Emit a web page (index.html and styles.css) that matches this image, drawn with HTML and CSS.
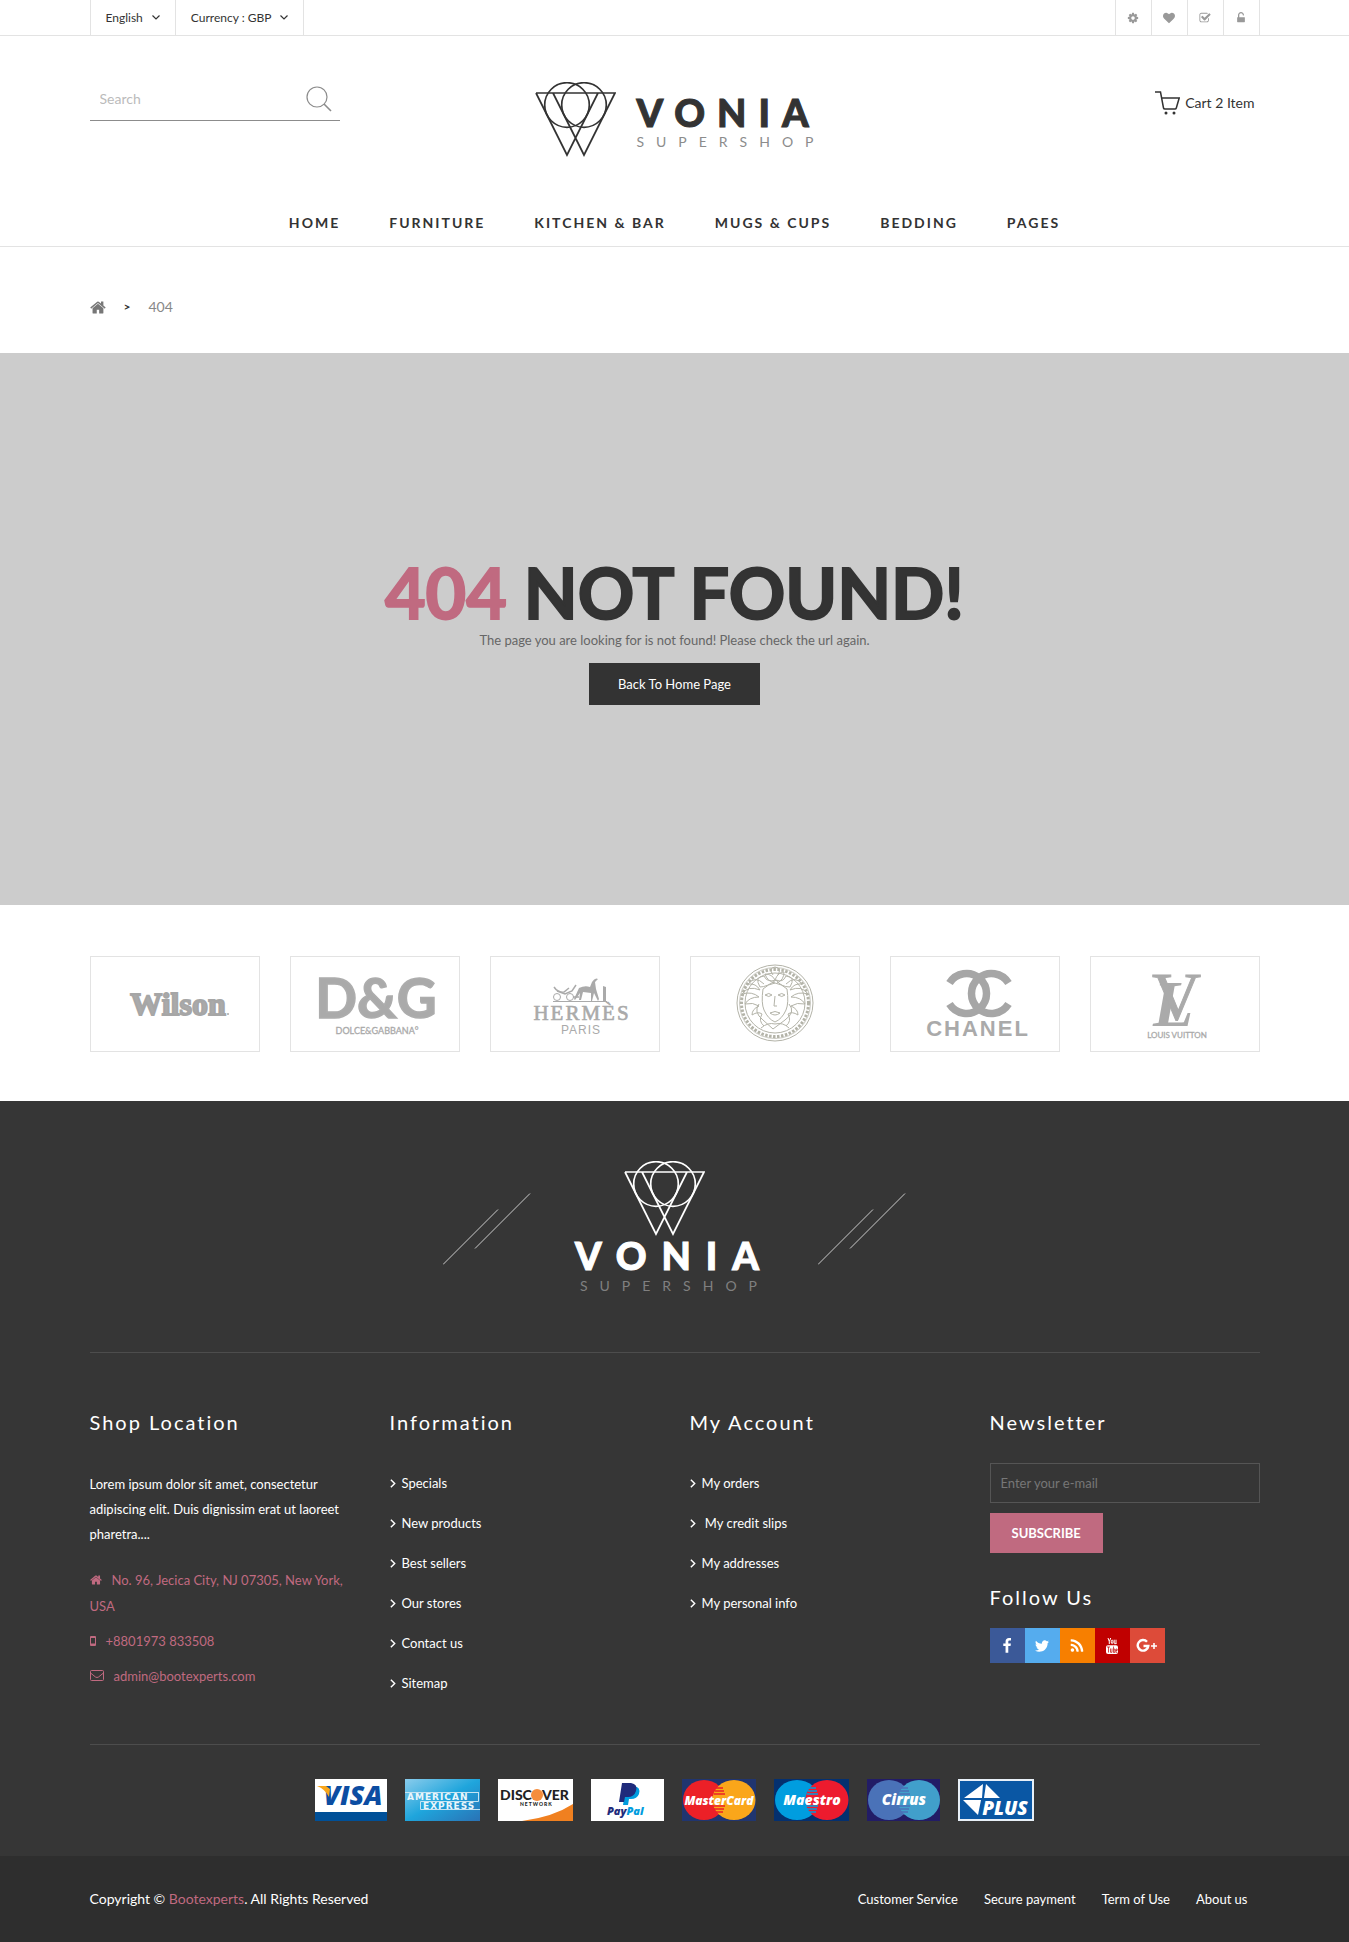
FILE: index.html
```html
<!DOCTYPE html>
<html lang="en">
<head>
<meta charset="utf-8">
<meta name="viewport" content="width=device-width, initial-scale=1">
<title>404 - Vonia</title>
<link rel="stylesheet" href="styles.css">
</head>
<body>
<svg class="sprite" aria-hidden="true">
  <symbol id="mark" viewBox="0 0 81 75"><g fill="none" stroke="currentColor" stroke-width="1.700"><path d="M1 11H80L49 73 18 11M1 11L32 73 63 11"/><circle cx="32" cy="23" r="22.300"/><circle cx="49" cy="23" r="22.300"/></g></symbol>
  <symbol id="slashes" viewBox="0 0 88 72"><path d="M0 71.500L55 16.500M32 55.500L87 .5" fill="none" stroke="#ddd" stroke-width=".9"/></symbol>
  <symbol id="down" viewBox="0 0 8 5"><path d="M.5.5L4 4 7.500.5" fill="none" stroke="currentColor" stroke-width="1.200"/></symbol>
  <symbol id="right" viewBox="0 0 5 8"><path d="M.6.6L4 4 .6 7.400" fill="none" stroke="currentColor" stroke-width="1.300"/></symbol>
  <symbol id="home" viewBox="50 250 1700 1300"><path fill="currentColor" d="M1472 992v480q0 26-19 45t-45 19h-384v-384h-256v384h-384q-26 0-45-19t-19-45v-480q0-1 .5-3t.5-3l575-474 575 474q1 2 1 6zm223-69l-62 74q-8 9-21 11h-3q-13 0-21-7l-692-577-692 577q-12 8-24 7-13-2-21-11l-62-74q-8-10-7-23.500t11-21.500l719-599q32-26 76-26t76 26l244 204v-195q0-14 9-23t23-9h192q14 0 23 9t9 23v408l219 182q10 8 11 21.500t-7 23.500z"/></symbol>
</svg>

<div class="topbar">
  <div class="container topbar-row">
    <div class="picks">
      <button type="button" class="pick">English <svg width="8" height="5"><use href="#down"/></svg></button>
      <button type="button" class="pick">Currency : GBP <svg width="8" height="5"><use href="#down"/></svg></button>
    </div>
    <nav class="tools" aria-label="Account">
      <a href="#" aria-label="Settings"><svg viewBox="0 0 1792 1792"><path d="M1152 896q0-106-75-181t-181-75-181 75-75 181 75 181 181 75 181-75 75-181zm512-109v222q0 12-8 23t-20 13l-185 28q-19 54-39 91 35 50 107 138 10 12 10 25t-9 23q-27 37-99 108t-94 71q-12 0-26-9l-138-108q-44 23-91 38-16 136-29 186-7 28-36 28h-222q-14 0-24.500-8.500t-11.500-21.500l-28-184q-49-16-90-37l-141 107q-10 9-25 9-14 0-25-11-126-114-165-168-7-10-7-23 0-12 8-23 15-21 51-66.500t54-70.500q-27-50-41-99l-183-27q-13-2-21-12.500t-8-23.500v-222q0-12 8-23t19-13l186-28q14-46 39-92-40-57-107-138-10-12-10-24 0-10 9-23 26-36 98.500-107.500t94.500-71.500q13 0 26 10l138 107q44-23 91-38 16-136 29-186 7-28 36-28h222q14 0 24.500 8.500t11.500 21.500l28 184q49 16 90 37l142-107q9-9 24-9 13 0 25 10 129 119 165 170 7 8 7 22 0 12-8 23-15 21-51 66.500t-54 70.500q26 50 41 98l183 28q13 2 21 12.500t8 23.500z"/></svg></a>
      <a href="#" aria-label="Wishlist"><svg viewBox="0 0 1792 1792"><path d="M896 1664q-26 0-44-18l-624-602q-10-8-27.500-26t-55.500-65.500-68-97.500-53.500-121-23.500-138q0-220 127-344t351-124q62 0 126.500 21.500t120 58 95.500 68.500 76 68q36-36 76-68t95.500-68.500 120-58 126.500-21.500q224 0 351 124t127 344q0 221-229 450l-623 600q-18 18-44 18z"/></svg></a>
      <a href="#" aria-label="Checkout"><svg viewBox="0 0 1792 1792"><path d="M1472 930v318q0 119-84.500 203.500t-203.500 84.500h-832q-119 0-203.500-84.500t-84.500-203.500v-832q0-119 84.500-203.500t203.500-84.500h832q63 0 117 25 15 7 18 23 3 17-9 29l-49 49q-10 10-23 10-3 0-9-2-23-6-45-6h-832q-66 0-113 47t-47 113v832q0 66 47 113t113 47h832q66 0 113-47t47-113v-254q0-13 9-22l64-64q10-10 23-10 6 0 12 3 20 8 20 29zm231-489l-814 814q-24 24-57 24t-57-24l-430-430q-24-24-24-57t24-57l110-110q24-24 57-24t57 24l263 263 647-647q24-24 57-24t57 24l110 110q24 24 24 57t-24 57z"/></svg></a>
      <a href="#" aria-label="Log in"><svg viewBox="0 0 1792 1792"><path d="M1376 768q40 0 68 28t28 68v576q0 40-28 68t-68 28h-960q-40 0-68-28t-28-68v-576q0-40 28-68t68-28h32v-320q0-185 131.500-316.500t316.500-131.500 316.500 131.500 131.500 316.500q0 26-19 45t-45 19h-64q-26 0-45-19t-19-45q0-106-75-181t-181-75-181 75-75 181v320h736z"/></svg></a>
    </nav>
  </div>
</div>

<header class="header">
  <div class="container header-row">
    <form class="search" role="search">
      <input type="search" placeholder="Search" aria-label="Search">
      <button type="submit" aria-label="Search"><svg width="26" height="26" viewBox="0 0 26 26" fill="none" stroke="#8c8c8c" stroke-width="1.200"><circle cx="11" cy="11" r="10"/><path d="M18 18l7 7" stroke-width="1.600"/></svg></button>
    </form>
    <a href="#" class="logo">
      <svg width="81" height="75"><use href="#mark"/></svg>
      <span class="logo-words"><span class="logo-name">VONIA</span><span class="logo-sub">SUPERSHOP</span></span>
    </a>
    <a href="#" class="cart">
      <svg width="25" height="24" viewBox="0 0 25 24" fill="none" stroke="#333" stroke-width="1.500"><path d="M0 1H5.500L8.500 17Q8.700 18 10 18H20Q21 18 21.300 17L24.200 7H7"/><circle cx="11" cy="22" r="1.500" fill="#333" stroke="none"/><circle cx="19" cy="22" r="1.500" fill="#333" stroke="none"/></svg>
      Cart 2 Item
    </a>
  </div>
  <nav class="menu" aria-label="Main">
    <a href="#">HOME</a><a href="#">FURNITURE</a><a href="#">KITCHEN &amp; BAR</a><a href="#">MUGS &amp; CUPS</a><a href="#">BEDDING</a><a href="#">PAGES</a>
  </nav>
</header>

<main>
  <nav class="container crumbs" aria-label="Breadcrumb">
    <a href="#" aria-label="Home"><svg width="16" height="13"><use href="#home"/></svg></a>
    <span class="crumb-sep">&gt;</span>
    <span>404</span>
  </nav>
  <section class="error">
    <h1><span>404</span> NOT FOUND!</h1>
    <p>The page you are looking for is not found! Please check the url again.</p>
    <a href="#" class="back">Back To Home Page</a>
  </section>
  <section class="container brands" aria-label="Brands">
    <a href="#" aria-label="Wilson"><svg viewBox="0 0 168 94"><text x="87" y="58" font-family="Liberation Serif" font-weight="700" font-size="32" stroke="#a6a6a6" stroke-width="1.800" text-anchor="middle">Wilson</text><circle cx="137" cy="57" r="1"/></svg></a>
    <a href="#" aria-label="Dolce and Gabbana"><svg viewBox="0 0 168 94"><text x="85" y="61" font-family="Lato" font-weight="700" font-size="55" stroke="#adadad" stroke-width="1.500" text-anchor="middle">D&amp;G</text><text x="86" y="77" font-family="Lato" font-size="9" stroke="#aaa" stroke-width=".3" text-anchor="middle">DOLCE&amp;GABBANA°</text></svg></a>
    <a href="#" aria-label="Hermes Paris"><svg viewBox="0 0 168 94"><g fill="none" stroke="#aaa"><path d="M62 44.500H116"/><circle cx="66" cy="40" r="3.500"/><circle cx="79" cy="40" r="3.500"/><path d="M63 30q4 6 10 5l5-4M66 34l8 3 7-3 4-6M82 40h6" stroke-width="1.500"/></g><path d="M88 31q6-3 11-1l2-5q3-5 6-3l-3 3 1 7 3 10-1 2-4-8-2 8h-1v-8l-8-1-2 8h-2l1-7-5 7-1-1z"/><path d="M112 29l3 1v14h-3z"/><text x="91" y="63" font-family="Liberation Serif" font-size="21" stroke="#aaa" stroke-width=".6" text-anchor="middle" letter-spacing="2">HERMÈS</text><text x="90" y="77" font-family="Liberation Sans" font-size="12" text-anchor="middle" letter-spacing="1">PARIS</text></svg></a>
    <a href="#" aria-label="Versace"><svg viewBox="0 0 168 94" fill="none" stroke="#b3b3a8"><circle cx="84" cy="46" r="38"/><circle cx="84" cy="46" r="35.500" stroke-width=".7"/><circle cx="84" cy="46" r="33.500" stroke-width="3" stroke-dasharray="2.500 1.500"/><circle cx="84" cy="46" r="30"/><path d="M72 32q-2 14 1 21 4 9 11 12 7-3 11-12 3-7 1-21-5-5-12-6-7 1-12 6zM74 38q4-3 7 0-3 3-7 0M87 38q4-3 7 0-3 3-7 0M84 39l-1 10h3M79 56q5-3 10 0-5 4-10 0"/><path d="M84 26q-8-2-10-9 7 0 10 6 3-8 9-8 0 8-7 11M82 18q-5-7 2-8 7 1 3 8M73 27q-9-9-16 0 8-1 12 6-12-5-18 4 10-3 17 3-10 0-14 7 8-2 14 2-7 3-7 9 6-4 10-1-4 7 2 12M95 27q9-9 16 0-8-1-12 6 12-5 18 4-10-3-17 3 10 0 14 7-8-2-14 2 7 3 7 9-6-4-10-1 4 7-2 12M69 30q-6-10 4-11 3 7 12 4-9 7-16 7M99 30q6-10-4-11-3 7-10 4 5 7 14 7M68 47q-6 8 4 16l10 9 12-9q11-8 4-16M70 71q7-6 14-4 8-2 14 4"/></svg></a>
    <a href="#" aria-label="Chanel"><svg viewBox="0 0 168 94"><g fill="none" stroke="#a6a6a6" stroke-width="7.500"><path d="M58.500 26A20 20 0 1 1 58.500 47"/><path d="M117.500 26A20 20 0 1 0 117.500 47"/></g><text x="87" y="79" font-family="Liberation Sans" font-weight="700" font-size="22" text-anchor="middle" letter-spacing="2">CHANEL</text></svg></a>
    <a href="#" aria-label="Louis Vuitton"><svg viewBox="0 0 168 94"><text x="62" y="69" font-family="Liberation Serif" font-style="italic" font-weight="700" font-size="66">L</text><text x="61" y="62" font-family="Liberation Serif" font-size="68" stroke="#aaa">V</text><text x="86" y="81" font-family="Lato" font-size="8" stroke="#aaa" stroke-width=".3" text-anchor="middle">LOUIS VUITTON</text></svg></a>
  </section>
</main>

<footer class="footer">
  <div class="container">
    <div class="foot-brand">
      <svg class="slashes" width="88" height="72"><use href="#slashes"/></svg>
      <a href="#" class="logo logo-stacked">
        <svg width="81" height="75"><use href="#mark"/></svg>
        <span class="logo-words"><span class="logo-name">VONIA</span><span class="logo-sub">SUPERSHOP</span></span>
      </a>
      <svg class="slashes" width="88" height="72"><use href="#slashes"/></svg>
    </div>
    <div class="foot-cols">
      <section>
        <h2>Shop Location</h2>
        <p class="about">Lorem ipsum dolor sit amet, consectetur adipiscing elit. Duis dignissim erat ut laoreet pharetra....</p>
        <address>
          <p><svg class="i-home" width="12" height="10"><use href="#home"/></svg>No. 96, Jecica City, NJ 07305, New York, USA</p>
          <p><svg class="i-phone" width="6" height="10" viewBox="0 0 6 10"><path d="M1 0h4q1 0 1 1v8q0 1-1 1H1q-1 0-1-1V1q0-1 1-1zM1 2v5.500h4V2z" fill="currentColor" fill-rule="evenodd"/></svg>+8801973 833508</p>
          <p><svg class="i-mail" width="14" height="11" viewBox="0 0 14 11" fill="none" stroke="currentColor"><rect x=".5" y=".5" width="13" height="10" rx="1"/><path d="M.5 3L5.500 7q1.500 1 3 0L13.500 3"/></svg><a href="mailto:admin@bootexperts.com">admin@bootexperts.com</a></p>
        </address>
      </section>
      <section>
        <h2>Information</h2>
        <ul>
          <li><a href="#"><svg width="6" height="9"><use href="#right"/></svg>Specials</a></li>
          <li><a href="#"><svg width="6" height="9"><use href="#right"/></svg>New products</a></li>
          <li><a href="#"><svg width="6" height="9"><use href="#right"/></svg>Best sellers</a></li>
          <li><a href="#"><svg width="6" height="9"><use href="#right"/></svg>Our stores</a></li>
          <li><a href="#"><svg width="6" height="9"><use href="#right"/></svg>Contact us</a></li>
          <li><a href="#"><svg width="6" height="9"><use href="#right"/></svg>Sitemap</a></li>
        </ul>
      </section>
      <section>
        <h2>My Account</h2>
        <ul>
          <li><a href="#"><svg width="6" height="9"><use href="#right"/></svg>My orders</a></li>
          <li><a href="#"><svg width="6" height="9"><use href="#right"/></svg>&nbsp;My credit slips</a></li>
          <li><a href="#"><svg width="6" height="9"><use href="#right"/></svg>My addresses</a></li>
          <li><a href="#"><svg width="6" height="9"><use href="#right"/></svg>My personal info</a></li>
        </ul>
      </section>
      <section>
        <h2>Newsletter</h2>
        <form class="newsletter">
          <input type="email" placeholder="Enter your e-mail" aria-label="E-mail">
          <button type="submit">SUBSCRIBE</button>
        </form>
        <h2 class="follow">Follow Us</h2>
        <div class="social">
          <a href="#" class="fb" aria-label="Facebook"><svg viewBox="0 0 1792 1792"><path d="M1343 12v264h-157q-86 0-116 36t-30 108v189h293l-39 296h-254v759h-306v-759h-255v-296h255v-218q0-186 104-288.500t277-102.500q147 0 228 12z"/></svg></a>
          <a href="#" class="tw" aria-label="Twitter"><svg viewBox="0 0 1792 1792"><path d="M1684 408q-67 98-162 167 1 14 1 42 0 130-38 259.500t-115.500 248.500-184.500 210.500-258 146-323 54.500q-271 0-496-145 35 4 78 4 225 0 401-138-105-2-188-64.500t-114-159.500q33 5 61 5 43 0 85-11-112-23-185.500-111.500t-73.500-205.500v-4q68 38 146 41-66-44-105-115t-39-154q0-88 44-163 121 149 294.500 238.500t371.500 99.500q-8-38-8-74 0-134 94.500-228.500t228.500-94.500q140 0 236 102 109-21 205-78-37 115-142 178 93-10 186-50z"/></svg></a>
          <a href="#" class="rss" aria-label="RSS"><svg viewBox="0 0 1792 1792"><path d="M576 1344q0 80-56 136t-136 56-136-56-56-136 56-136 136-56 136 56 56 136zm512 123q2 28-17 48-18 21-47 21h-135q-25 0-43-16.500t-20-41.500q-22-229-184.500-391.500t-391.500-184.500q-25-2-41.500-20t-16.500-43v-135q0-29 21-47 17-17 43-17h5q160 13 306 80.500t259 181.500q114 113 181.500 259t80.500 306zm512 2q2 27-18 47-18 20-46 20h-143q-26 0-44.500-17.500t-19.500-42.500q-12-215-101-408.500t-231.500-336-336-231.500-408.500-102q-25-1-42.500-19.500t-17.500-43.500v-143q0-28 20-46 18-18 44-18h3q262 13 501.500 120t425.500 294q187 186 294 425.500t120 501.500z"/></svg></a>
          <a href="#" class="yt" aria-label="YouTube"><svg viewBox="0 0 16 16"><path d="M4 0l1.300 3.500V6M6.700 0L5.300 3.500M12 1.700v3.500q0 .6-1 .6-.8 0-.8-.6V1.700M12 5v1" fill="none" stroke="#fff" stroke-width="1"/><ellipse cx="8.100" cy="3.800" rx=".9" ry="1.800" fill="none" stroke="#fff"/><rect x="2" y="7.200" width="12" height="8.800" rx="2"/><path d="M3 9h3M4.500 9v5.500M6.500 10.500v3.800h1.500v-3.800M9.500 8.500v6h1.300v-3.500h-1M13.200 12.500h-1.300v-1.500h1.300zM11.900 12v2.300h1.300" fill="none" stroke="#c00000" stroke-width=".7"/></svg></a>
          <a href="#" class="gp" aria-label="Google Plus"><svg class="wide" viewBox="0 0 22 16"><path d="M11 3.800A5.300 5.300 0 1 0 12.300 8H7.500" fill="none" stroke="#fff" stroke-width="2.400"/><path d="M15 7.200h2.200V5h1.600v2.200H21v1.600h-2.200V11h-1.600V8.800H15z"/></svg></a>
        </div>
      </section>
    </div>
    <div class="cards">
      <svg width="72" height="42" role="img" aria-label="Visa"><path fill="#fff" d="M0 0h72v42H0z"/><path fill="#005098" d="M0 33h72v9H0z"/><text x="38" y="26" font-family="Open Sans" font-weight="800" font-style="italic" font-size="27" text-anchor="middle" fill="#0c4da2">VISA</text><path d="M2 7h9l4 3-1 8Q10 10 2 7z" fill="#f9a61a"/></svg>
      <svg width="75" height="42" role="img" aria-label="American Express"><defs><linearGradient id="amex" x1="0" y1="0" x2="1" y2="1"><stop offset="0" stop-color="#8accec"/><stop offset=".5" stop-color="#1fa5dc"/><stop offset="1" stop-color="#2a72b5"/></linearGradient></defs><path fill="url(#amex)" d="M0 0h75v42H0z"/><path fill="none" stroke="#c5e4f3" d="M0 13.500h74M73.500 14v8.500H15.500v8H75"/><g font-family="DejaVu Sans" font-weight="700" font-size="9" fill="#eaf6fc" letter-spacing="1"><text x="2" y="21">AMERICAN</text><text x="18" y="30">EXPRESS</text></g></svg>
      <svg width="75" height="42" role="img" aria-label="Discover Network"><path fill="#fff" d="M0 0h75v42H0z"/><path d="M24 42Q55 38 75 25v17z" fill="#f08020"/><circle cx="39" cy="16" r="6" fill="#f58d3c"/><g font-family="Lato" font-weight="900" fill="#222"><text x="2" y="21" font-size="14">DISC</text><text x="44" y="21" font-size="14">VER</text><text x="22" y="27" font-size="5" letter-spacing="1">NETWORK</text></g></svg>
      <svg width="73" height="42" role="img" aria-label="PayPal"><path fill="#fff" d="M0 0h73v42H0z"/><path d="M35 7h8q7 1 5 8-2 5-8 5h-2l-1 6h-5z" fill="#009cde"/><path d="M31 4h9q7 1 5 8-2 6-8 6h-3l-1 5h-5z" fill="#1f2b7b"/><text x="16" y="36" font-family="Open Sans" font-weight="800" font-style="italic" font-size="11" fill="#1f2b7b">Pay<tspan fill="#009cde">Pal</tspan></text></svg>
      <svg width="74" height="42" role="img" aria-label="MasterCard"><path fill="#20356f" d="M0 0h74v42H0z"/><ellipse cx="22" cy="21" rx="21" ry="20" fill="#ec2027"/><ellipse cx="52" cy="21" rx="21.500" ry="20" fill="#faa61a"/><path d="M34 9h7M33 12h9M32 15h11M31 27h12M32 30h10M34 33h7" stroke="#ec2027" stroke-width="1.500"/><text x="37" y="26" font-family="Open Sans" font-weight="800" font-style="italic" font-size="12" text-anchor="middle" fill="#fff">MasterCard</text></svg>
      <svg width="75" height="42" role="img" aria-label="Maestro"><path fill="#04306f" d="M0 0h75v42H0z"/><ellipse cx="23" cy="21" rx="22" ry="20" fill="#009ddf"/><ellipse cx="53" cy="21" rx="21.500" ry="20" fill="#ed1b2e"/><path d="M35 9h7M34 12h9M33 15h11M32 27h12M33 30h10M35 33h7" stroke="#009ddf" stroke-width="1.500"/><text x="38" y="26" font-family="Open Sans" font-weight="800" font-style="italic" font-size="14" text-anchor="middle" fill="#fff">Maestro</text></svg>
      <svg width="73" height="42" role="img" aria-label="Cirrus"><path fill="#221c66" d="M0 0h73v42H0z"/><ellipse cx="22" cy="21" rx="21" ry="20" fill="#4a72b8"/><ellipse cx="52" cy="21" rx="21" ry="20" fill="#419fcb"/><path d="M34 9h7M33 12h9M32 15h11M31 27h12M32 30h10M34 33h7" stroke="#4a72b8" stroke-width="1.500"/><text x="37" y="26" font-family="Open Sans" font-weight="800" font-style="italic" font-size="15" text-anchor="middle" fill="#fff">Cirrus</text></svg>
      <svg width="76" height="42" role="img" aria-label="Plus"><path fill="#0a57a4" stroke="#e8f0f8" stroke-width="2" d="M1 1h74v40H1z"/><path fill="#fff" d="M25 5L6 19h18zM28 5l14 14H26zM5 21h18l-3 15z"/><text x="47" y="36" font-family="Open Sans" font-weight="800" font-style="italic" font-size="19" text-anchor="middle" fill="#fff">PLUS</text></svg>
    </div>
  </div>
  <div class="legal">
    <div class="container legal-row">
      <p>Copyright © <a href="#" class="pink">Bootexperts</a>. All Rights Reserved</p>
      <nav aria-label="Legal"><a href="#">Customer Service</a><a href="#">Secure payment</a><a href="#">Term of Use</a><a href="#">About us</a></nav>
    </div>
  </div>
</footer>
</body>
</html>
```
FILE: styles.css
```css
* { box-sizing: border-box; }
body { margin: 0; background: #fff; color: #333; font-family: Lato, "Open Sans", sans-serif; font-size: 14px; line-height: 24px; }
a { color: inherit; text-decoration: none; }
h1, h2, p, ul { margin: 0; padding: 0; }
ul { list-style: none; }
button, input { font: inherit; color: inherit; border: 0; border-radius: 0; background: none; padding: 0; }
.sprite { display: none; }
.container { max-width: 1200px; margin: 0 auto; padding: 0 15px; }
.pink { color: #c06a80; }

.topbar { border-bottom: 1px solid #e3e3e3; }
.topbar-row, .picks, .tools { display: flex; }
.topbar-row { justify-content: space-between; }
.picks, .tools { height: 35px; border-left: 1px solid #e3e3e3; }
.pick { display: flex; align-items: center; gap: 9px; padding: 5px 15px; border-right: 1px solid #e3e3e3; font-size: 12px; }
.tools a { display: flex; align-items: center; justify-content: center; width: 36px; border-right: 1px solid #e3e3e3; }
.tools svg { width: 12px; height: 12px; fill: #999; }

.header { border-bottom: 1px solid #e3e3e3; }
.header-row { display: grid; grid-template-columns: 1fr auto 1fr; padding-top: 46px; }
.search { display: flex; align-items: center; width: 250px; height: 43px; margin-top: -4px; padding: 0 8px 0 10px; border-bottom: 1px solid #8c8c8c; }
.search input { flex: 1; min-width: 0; outline: 0; }
.search input::placeholder { color: #bbb; opacity: 1; }
.search button { height: 26px; line-height: 0; }
.logo { display: flex; gap: 20px; color: #333; }
.logo-words { display: flex; flex-direction: column; padding-top: 12px; }
.logo-name { font-size: 38px; font-weight: 900; line-height: 36px; letter-spacing: 12px; margin-right: -12px; -webkit-text-stroke: 1px currentColor; }
.logo-sub { font-size: 14px; line-height: 24px; letter-spacing: 12px; margin-right: -12px; color: #8c8c8c; }
.cart { display: flex; align-items: center; align-self: start; justify-self: end; gap: 5px; height: 24px; margin-top: 9px; padding-right: 5px; }
.menu { display: flex; flex-wrap: wrap; justify-content: center; gap: 0 49px; margin-top: 43px; font-weight: 700; line-height: 46px; letter-spacing: 2px; }

.crumbs { display: flex; align-items: center; gap: 18px; padding-top: 50px; padding-bottom: 36px; line-height: 20px; color: #888; }
.crumbs a { display: flex; color: #777; }
.crumb-sep { font-size: 12px; font-weight: 700; color: #333; }

.error { padding: 203px 15px 200px; background: #ccc; text-align: center; }
.error h1 { font-size: 70px; font-weight: 700; line-height: 72px; -webkit-text-stroke: 2px currentColor; color: #333; }
.error h1 span { color: #c06a80; }
.error p { font-size: 13px; line-height: 24px; color: #666; }
.back { display: inline-block; margin-top: 11px; padding: 0 29px; background: #333; color: #fff; font-size: 13px; line-height: 42px; vertical-align: top; }

.brands { display: grid; grid-template-columns: repeat(6, 1fr); gap: 30px; padding-top: 51px; padding-bottom: 49px; }
.brands a { display: flex; height: 96px; border: 1px solid #e3e3e3; }
.brands svg { width: 100%; height: 100%; }
.brands svg:not([fill]) { fill: #aaa; }

.footer { background: #363636; color: #fff; }
.foot-brand { display: flex; justify-content: center; gap: 44px; height: 252px; padding-top: 60px; border-bottom: 1px solid #4d4d4d; }
.slashes { margin-top: 32px; }
.logo-stacked { flex-direction: column; align-items: center; gap: 0; color: #fff; }
.logo-stacked svg { margin-right: 20px; }
.logo-stacked .logo-words { padding-top: 1px; align-items: center; }
.logo-stacked .logo-name { letter-spacing: 15px; margin: 0; }
.logo-stacked .logo-sub { color: #808080; margin: 0; line-height: 26px; }
.foot-cols { display: grid; grid-template-columns: repeat(4, 1fr); gap: 30px; padding: 57px 0 41px; border-bottom: 1px solid #4d4d4d; font-size: 13px; }
.foot-cols h2 { margin-bottom: 29px; font-size: 20px; font-weight: 400; letter-spacing: 2px; }
.about { margin-top: 38px; padding-right: 15px; line-height: 25px; }
.foot-cols address { display: grid; gap: 9px; margin-top: 20px; padding-right: 15px; color: #c06a80; font-style: normal; line-height: 26px; }
address svg { margin-right: 10px; }
.foot-cols li a { display: flex; align-items: center; gap: 6px; height: 40px; }
.newsletter { display: grid; gap: 10px; justify-items: start; }
.newsletter input { width: 100%; height: 40px; padding: 0 10px; border: 1px solid #555; }
.newsletter input::placeholder { color: #777; opacity: 1; }
.newsletter button { height: 40px; padding: 0 22px; background: #c06a80; color: #fff; font-weight: 700; }
.foot-cols .follow { margin: 32px 0 19px; }
.social { display: flex; }
.social a { display: flex; align-items: center; justify-content: center; width: 35px; height: 35px; }
.social svg { width: 16px; height: 16px; fill: #fff; }
.social .wide { width: 22px; }
.fb { background: #3b5998; }
.tw { background: #55acee; }
.rss { background: #f77f00; }
.yt { background: #c00000; }
.gp { background: #dd4b39; }
.cards { display: flex; flex-wrap: wrap; justify-content: center; gap: 18px; padding: 34px 0 35px; }
.legal { background: #2e2e2e; }
.legal-row { display: flex; flex-wrap: wrap; align-items: center; justify-content: space-between; min-height: 86px; }
.legal nav { display: flex; gap: 26px; padding-right: 12px; font-size: 13px; }
```
